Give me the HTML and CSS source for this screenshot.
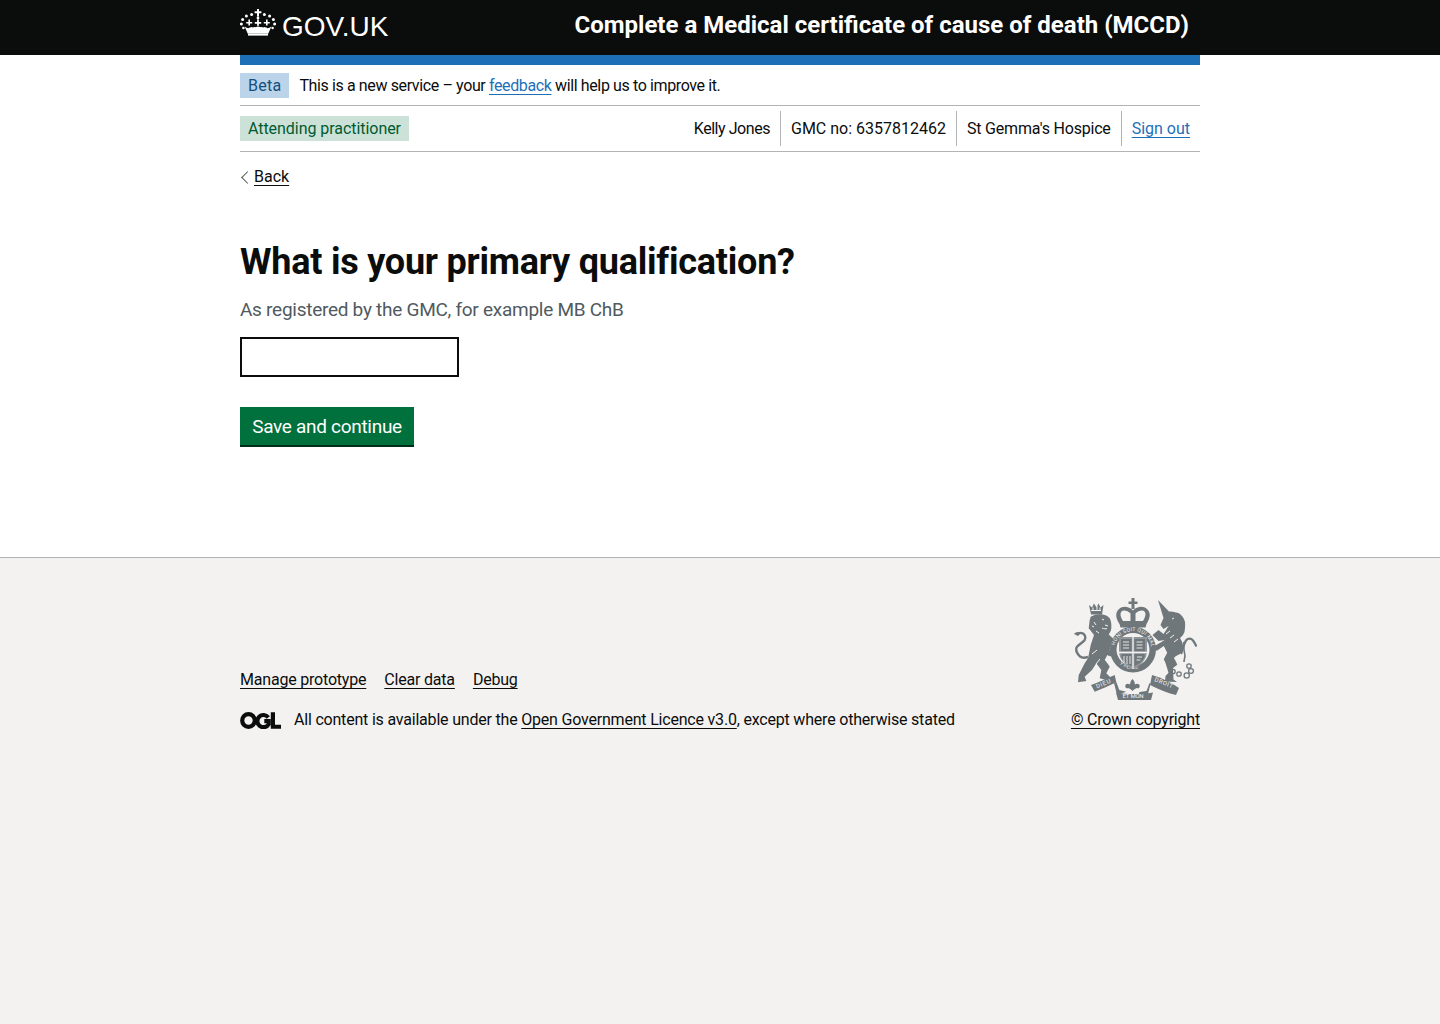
FILE: index.html
```html
<!DOCTYPE html>
<html lang="en">
<head>
  <meta charset="UTF-8">
  <meta name="viewport" content="width=device-width, initial-scale=1.0">
  <title>What is your primary qualification?</title>
  <link rel="stylesheet" href="styles.css">
</head>
<body>

  <header class="header">
    <div class="container header-inner">
      <a class="logo" href="#">
        <svg class="crown" viewBox="0 0 36 28" width="36" height="28" aria-hidden="true">
          <g fill="#fff">
            <path d="M17 1h2v2.200h2.400v2H19V8.400h-2V5.200h-2.400v-2H17z"/>
            <circle cx="18" cy="10" r="1.400"/>
            <circle cx="11.600" cy="6.600" r="1.500"/>
            <circle cx="24.400" cy="6.600" r="1.500"/>
            <circle cx="6.400" cy="8" r="1.500"/>
            <circle cx="29.600" cy="8" r="1.500"/>
            <circle cx="2.600" cy="11.400" r="1.500"/>
            <circle cx="33.400" cy="11.400" r="1.500"/>
            <circle cx="1.400" cy="16" r="1.500"/>
            <circle cx="34.600" cy="16" r="1.500"/>
            <circle cx="3.400" cy="20" r="1.300"/>
            <circle cx="32.600" cy="20" r="1.300"/>
            <path d="M17.100 11.500h1.800v2.400h2.300v1.800h-2.300v2.100h-1.800v-2.100h-2.300v-1.800h2.300z"/>
            <path d="M8.400 11.500H10v2.400h2.200v1.700H10v2H8.400v-2H6.200v-1.700h2.200z"/>
            <path d="M26 11.500h1.600v2.400h2.200v1.700h-2.200v2H26v-2h-2.200v-1.700H26z"/>
            <path d="M4.600 18.400c1.400 1 2.600 1.600 4 1.800.3-.6 1-.9 1.600-.6.700-.9 2-.9 2.700-.1.900-.7 2-.7 2.800-.2.600-.5 1.400-.7 2.300-.7s1.700.2 2.300.7c.8-.5 1.900-.5 2.800.2.700-.8 2-.8 2.700.1.600-.3 1.300 0 1.600.6 1.400-.2 2.600-.8 4-1.800l-3.200 7.300H7.800z"/>
          </g>
          <rect x="8" y="25.900" width="20" height="1.700" fill="#fff"/>
        </svg>
        <span class="logo-text">GOV.UK</span>
      </a>
      <a class="service-name" href="#">Complete a Medical certificate of cause of death (MCCD)</a>
    </div>
  </header>

  <div class="container">
    <div class="blue-bar"></div>

    <div class="phase-banner">
      <strong class="tag tag-blue">Beta</strong>
      <span class="phase-text">This is a new service – your <a class="link" href="#">feedback</a> will help us to improve it.</span>
    </div>

    <div class="user-bar">
      <strong class="tag tag-green">Attending practitioner</strong>
      <ul class="user-details">
        <li class="user-name">Kelly Jones</li>
        <li>GMC no: 6357812462</li>
        <li class="user-org">St Gemma's Hospice</li>
        <li><a class="link" href="#">Sign out</a></li>
      </ul>
    </div>

    <a class="back-link" href="#">Back</a>

    <main class="main">
      <h1>What is your primary qualification?</h1>
      <div class="hint">As registered by the GMC, for example MB ChB</div>
      <input class="text-input" type="text" aria-label="What is your primary qualification?">
      <button class="button" type="button">Save and continue</button>
    </main>
  </div>

  <footer class="footer">
    <div class="container footer-inner">
      <div class="footer-left">
        <ul class="footer-links">
          <li><a href="#">Manage prototype</a></li>
          <li><a href="#">Clear data</a></li>
          <li><a href="#">Debug</a></li>
        </ul>
        <div class="licence">
          <svg class="ogl" viewBox="0 0 41 17" width="41" height="17" aria-hidden="true">
            <g fill="none" stroke="#0b0c0c" stroke-width="4.200">
              <circle cx="8.500" cy="8.500" r="6.300"/>
              <path d="M28.300 5.400a6.100 6.100 0 1 0 .4 6.800V9.200h-4.400"/>
            </g>
            <path d="M30.800 .2h4.200v12.600h6v4h-10.200z" fill="#0b0c0c"/>
          </svg>
          <span>All content is available under the <a href="#">Open Government Licence v3.0</a>, except where otherwise stated</span>
        </div>
      </div>
      <div class="footer-right">
        <svg class="crest" viewBox="0 0 125 102" width="125" height="102" aria-hidden="true">
          <g fill="#6f777b">
            <!-- royal crown -->
            <path d="M59.500 0h3v3.500h3v2.600h-3V11h-3V6.100h-3V3.500h3z"/>
            <path d="M47 11c4-3.500 10-2.500 14 1.500 4-4 10-5 14-1.500 4 3.500 3.500 9-.5 15l-1 3.500h-25l-1-3.500c-4-6-4.500-11.500-.5-15zm2.500 2.500c-2 2.500-.5 6.500 1.500 9.500h7.500v-7.500c-2.500-2.500-7-4-9-2zm23 0c-2-2-6.500-.5-9 2V23H71c2-3 3.500-7 1.500-9.500z"/>
            <path d="M59 15h4v8h-4z"/>
            <!-- lion crown -->
            <path d="M17 7l3 2.500 2-4 2.500 4 2-4 2 4 3-2.500-1.500 9.500H19z"/>
            <!-- lion -->
            <path d="M18.700 18.700C22 16.800 26 16 29.300 16.300c3.500.5 6.800 1.800 8.400 4 1.500 3 1.900 6.500 1.600 10-.2 2.300-1.200 4.500-2.600 6 1.400 1.500 2.800 3 4.300 4 2.300.7 4.700 1.800 6.700 3.400l-1.700 3.300c-2.300 0-4.500-.3-6.700-.7-.7 2-1.200 3.800-1.600 5.700 1.700 1 3.400 2 5 3.300l-1.700 3.400c-1.900 0-3.800-.5-5.700-1.700-.8 1.800-1.700 3.500-2.600 5 1.800 2 3.700 4.300 5 6.700l-3.400 6.600 5 5-1.600 2.700-10-2.700 1.600-8.300-5-6.700-4.300 6.700-7.300 6.700 1.600 4.300-8.300 1.300.7-7.300L12.700 65.300 16 60.300l2.700-13.300 3.300-10-5.300-6.700 1-8.300z"/>
            <!-- unicorn -->
            <path d="M86 2l11 11.600c1.800-.4 3.500-.2 5 .4 2.500.6 4.500 1 6 2 2.500 2 4.200 4.700 5 8 .4 3.300 0 6.700-.5 10-1 2.500-2.500 4.500-4.500 6 1.500 2.500 2.800 5 3 8 0 3-.8 5.500-3 8-2.700 1.200-5.500 2.500-6 4.300 1 1.700 2.300 3.800 3.300 6.400l-4.300 3.300.5 11.400 3.500 2.600-12-.6.500-5.400 3-3.300-3-9.700-1.700-3.700 3.400-6.600-3.400-6.700-7.300 5-2-5 7-4 3-2-6 1-6-6 6-5 5 4 2-3 3-5-5 3-3-4 3-7z"/>
            <!-- scrolls -->
            <path d="M19 87c8-3 16-6.500 23.700-10l1.600 7.300c-7 3.200-14.300 6.700-21.600 9.400z"/>
            <path d="M80 77c9 2.500 18.500 7 27 13l-3 7c-9-2-18-6-26-10z"/>
            <path d="M44.300 84l3 8 7 1.800-9.300 3.200-3-12zM77.500 85l-3 8-7 1-1 3 9 1 3-12z"/>
            <path d="M44 94.500c11 2 25 2 37 0l-2 7.500H46z"/>
            <!-- fleur between the scrolls -->
            <path d="M60.500 81c1.800 1.800 2.400 3.600 2.400 5.400 2.400-1.200 4.800-.6 4.800 1.800 0 1.800-1.800 2.400-3 1.800-.6 0-1.200 1.200-2.400 1.200l-1.800 1.800-1.800-1.800c-1.200 0-1.800-1.200-2.400-1.200-1.200.6-3 0-3-1.800 0-2.400 2.400-3 4.800-1.800 0-1.800.6-3.600 2.400-5.400z"/>
            <!-- garter -->
            <circle cx="61" cy="51.500" r="23"/>
          </g>
          <!-- lion face and mane -->
          <g fill="none" stroke="#f3f2f1" stroke-width="1">
            <path d="M30 21l2 1M33 27l3 1M30 30c2 1 4 1 5 .5M22 24l2 3M24 33l3 2M20 28l2 1"/>
            <path d="M19 12.500h10M21 9.500v3M25 8v4M28 9.500v3"/>
            <path d="M20 56l5-4M24 66l4-5M100 21l2-1M94 36l4-3M98 40l4-3M102 44l4-3"/>
          </g>
          <!-- lion tail -->
          <path d="M16 59c-3 1-6 1-8-.5-3-3-4-6-3.700-8.200.3-3 6-5 8.400-8.300 1.500-2.500 0-6-2-6.700-2-.7-4.500-.5-6.400 1" fill="none" stroke="#6f777b" stroke-width="2.400"/>
          <path d="M2 36c1-2 5-2 7-1l-3 3z" fill="#6f777b"/>
          <!-- unicorn tail and chain -->
          <g fill="none" stroke="#6f777b">
            <path d="M109 56c2-4 2.500-10 5-13.500 2-2.500 5-2.500 7 0 1.500 2 2.500 4 3.500 6" stroke-width="2.200"/>
            <path d="M112 44c-1 5 .5 10 1 14-.5 3-1 5-1 6" stroke-width="1.600"/>
            <g stroke-width="1.300">
              <circle cx="101" cy="73.500" r="2.200"/>
              <circle cx="107" cy="76" r="2.200"/>
              <circle cx="114.700" cy="77.500" r="2.600"/>
              <circle cx="119" cy="73" r="2.400"/>
              <circle cx="117" cy="68" r="2.200"/>
            </g>
          </g>
          <!-- motto, and the words on the garter -->
          <path id="gartertop" d="M42.500 51.500a18.500 18.500 0 0 1 37 0" fill="none"/>
          <path id="garterbot" d="M41 55a20.500 20.500 0 0 0 40 0" fill="none"/>
          <g class="crest-text">
            <text font-size="5.200" letter-spacing=".3"><textPath href="#gartertop" startOffset="4">HONI SOIT QUI MAL</textPath></text>
            <text font-size="4.800" letter-spacing=".2"><textPath href="#garterbot" startOffset="13">Y PENSE</textPath></text>
            <text font-size="6" transform="translate(25 90.500) rotate(-23)" letter-spacing=".8">DIEU</text>
            <text font-size="6" transform="translate(82 83) rotate(22)" letter-spacing=".6">DROIT</text>
            <text font-size="6" x="61" y="100" text-anchor="middle">ET MON</text>
          </g>
          <!-- shield inside the garter -->
          <circle cx="61" cy="51.500" r="16.500" fill="#f3f2f1"/>
          <path d="M47 39h28v14c0 9-7 15-14 18-7-3-14-9-14-18z" fill="#8f9599"/>
          <g fill="#6f777b">
            <path d="M49 41h10.500v12H49zM62.500 41H73v12H62.500zM49.500 56h10v12c-4-1.500-8.500-5-10-9zM62.500 56H72.500v3c-1.500 4-6 7.500-10 9z"/>
          </g>
          <path d="M61 39v32M47 54.500h28" stroke="#f3f2f1" stroke-width="1.300"/>
          <g fill="none" stroke="#f3f2f1" stroke-width=".9">
            <path d="M51 44h6M51 47h6M51 50h6M64.500 44h6M64.500 47h6M64.500 50h6M52 58v7M55 58v8M58 58v8M65 59h5M64.500 62h4"/>
          </g>
        </svg>
        <a class="copyright" href="#">© Crown copyright</a>
      </div>
    </div>
  </footer>

</body>
</html>
```

FILE: styles.css
```css
/* General Styles */
* {
  box-sizing: border-box;
  margin: 0;
  padding: 0;
}

html, body {
  height: 100%;
}

body {
  font-family: Roboto, Arial, sans-serif;
  color: #0b0c0c;
  background-color: #fff;
  display: flex;
  flex-direction: column;
}

ul {
  list-style: none;
}

a {
  color: inherit;
  text-underline-offset: 3px;
  text-decoration-thickness: 1px;
}

.link {
  color: #1d70b8;
}

.container {
  width: 960px;
  margin: 0 auto;
}

/* Header */
.header {
  background-color: #0b0c0c;
  height: 55px;
  color: #fff;
}

.header-inner {
  display: flex;
  justify-content: space-between;
  padding-right: 11px;
}

.logo {
  display: flex;
  align-items: flex-start;
  text-decoration: none;
  padding-top: 8px;
}

.crown {
  display: block;
}

.logo-text {
  font-family: "Liberation Sans", Arial, sans-serif;
  font-size: 28px;
  line-height: 36px;
  margin-left: 6px;
  margin-top: 1px;
}

.service-name {
  font-size: 24px;
  font-weight: 700;
  line-height: 50px;
  text-decoration: none;
}

.blue-bar {
  height: 10px;
  background-color: #1d70b8;
}

/* Tags */
.tag {
  display: inline-block;
  font-weight: 400;
  font-size: 16px;
  line-height: 25px;
  height: 25px;
  padding: 0 8px;
}

.tag-blue {
  background-color: #bbd4ea;
  color: #144e81;
  letter-spacing: 0.25px;
}

.tag-green {
  background-color: #cce2d8;
  color: #005a30;
  letter-spacing: -0.05px;
}

/* Phase banner */
.phase-banner {
  display: flex;
  align-items: center;
  gap: 10px;
  height: 41px;
  font-size: 16px;
  border-bottom: 1px solid #b1b4b6;
}

.phase-text {
  letter-spacing: -0.38px;
}

/* User bar */
.user-bar {
  display: flex;
  justify-content: space-between;
  align-items: center;
  height: 46px;
  font-size: 16px;
  border-bottom: 1px solid #b1b4b6;
}

.user-details {
  display: flex;
}

.user-details li {
  padding: 0 10px;
  line-height: 35px;
  border-left: 1px solid #b1b4b6;
}

.user-details li:first-child {
  border-left: none;
}

.user-details .user-name {
  letter-spacing: -0.45px;
}

.user-details .user-org {
  letter-spacing: -0.2px;
}

/* Back link */
.back-link {
  display: inline-block;
  position: relative;
  margin-top: 15px;
  margin-left: 14px;
  font-size: 16px;
  line-height: 20px;
}

.back-link::before {
  content: "";
  position: absolute;
  left: -11px;
  top: 6px;
  width: 8px;
  height: 8px;
  border-left: 1px solid #505a5f;
  border-bottom: 1px solid #505a5f;
  transform: rotate(45deg);
}

/* Main */
.main {
  padding-top: 53px;
  height: 370px;
}

h1 {
  font-size: 36px;
  line-height: 45px;
  font-weight: 700;
  letter-spacing: -0.23px;
}

.hint {
  margin-top: 12px;
  font-size: 19px;
  line-height: 25px;
  color: #505a5f;
  letter-spacing: -0.27px;
}

.text-input {
  display: block;
  margin-top: 15px;
  width: 219px;
  height: 40px;
  border: 2px solid #0b0c0c;
  background-color: #fff;
}

.button {
  display: block;
  margin-top: 30px;
  height: 38px;
  width: 174px;
  font-family: inherit;
  font-size: 19px;
  letter-spacing: -0.3px;
  color: #fff;
  background-color: #00703c;
  border: none;
  border-radius: 0;
  box-shadow: 0 2px 0 #002d18;
}

/* Footer */
.footer {
  flex: 1;
  background-color: #f3f2f1;
  border-top: 1px solid #b1b4b6;
  font-size: 16px;
  letter-spacing: -0.2px;
  padding-top: 40px;
}

.footer-inner {
  display: flex;
  justify-content: space-between;
  align-items: flex-end;
}

.footer-links {
  display: flex;
  gap: 18px;
  line-height: 20px;
  margin-bottom: 20px;
}

.licence {
  display: flex;
  align-items: center;
  gap: 13px;
  line-height: 20px;
}

.ogl {
  display: block;
}

.footer-right {
  display: flex;
  flex-direction: column;
  align-items: flex-end;
  line-height: 20px;
}

.crest {
  display: block;
  margin-bottom: 10px;
  margin-right: 3px;
}

.crest-text {
  font-family: Roboto, Arial, sans-serif;
  fill: #f3f2f1;
}
```
